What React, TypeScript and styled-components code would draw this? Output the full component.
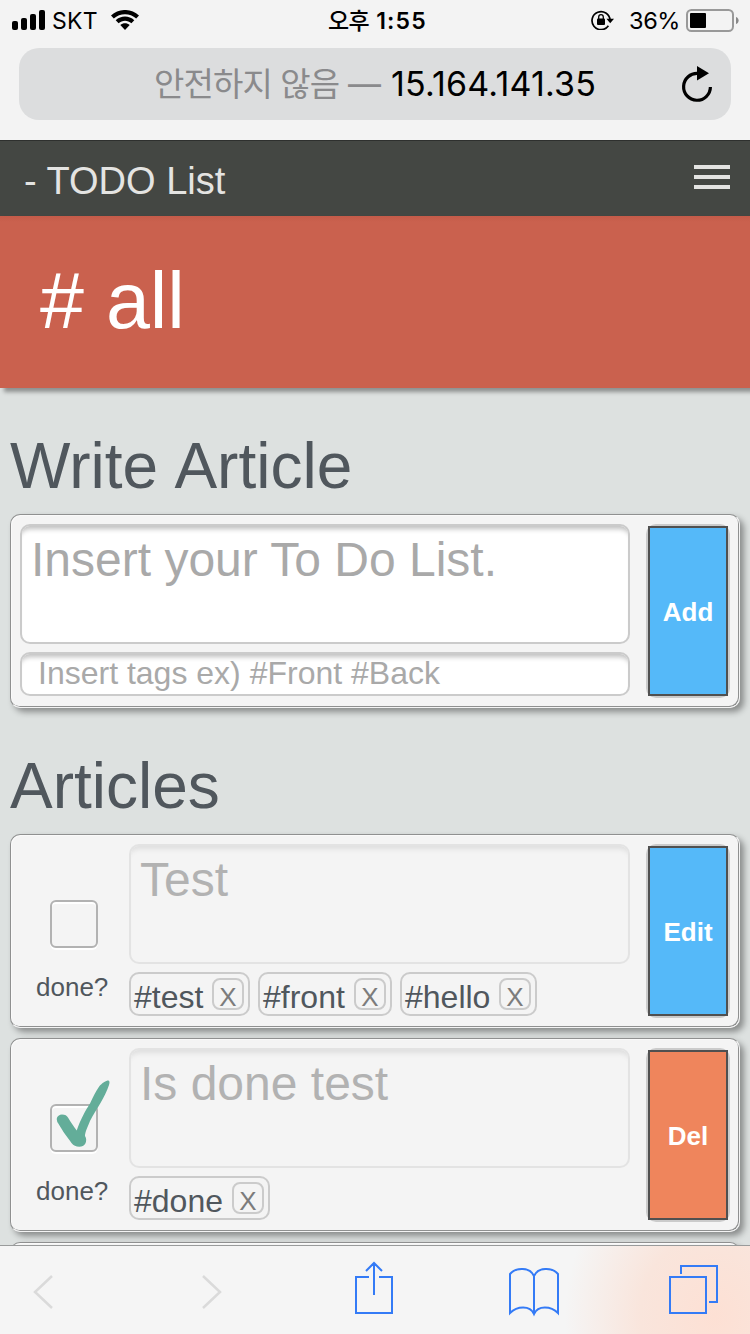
import React from "react";
import styled, { createGlobalStyle } from "styled-components";

const Global = createGlobalStyle`
  * { box-sizing: border-box; }
  body { margin: 0; }
`;

const sans = `"Liberation Sans", Arial, sans-serif`;
const system = `Inter, "Noto Sans CJK KR", sans-serif`;

const Screen = styled.div`
  width: 750px;
  height: 1334px;
  display: flex;
  flex-direction: column;
  overflow: hidden;
  background: #dde1e0;
  font-family: ${sans};
  color: #50575d;
`;

const BrowserTop = styled.div`
  height: 140px;
  flex: none;
  background: #f3f3f3;
  font-family: ${system};
  color: #000;
`;

const StatusBar = styled.div`
  height: 48px;
  padding: 0 11px 8px 12px;
  display: grid;
  grid-template-columns: 1fr auto 1fr;
  align-items: center;
  font-size: 24px;
  line-height: 40px;
`;

const StatusGroup = styled.div<{ $end?: boolean }>`
  display: flex;
  align-items: center;
  justify-content: ${(p) => (p.$end ? "flex-end" : "flex-start")};
`;

const Carrier = styled.span`
  margin: 2px 13px 0 6px;
  font-size: 23px;
  line-height: 38px;
  letter-spacing: 0.3px;
`;

const Clock = styled.div`
  display: flex;
  gap: 7px;
  padding-top: 2px;
  margin-left: 4px;
  line-height: 38px;
  font-size: 23px;
  font-weight: 600;
  letter-spacing: 1.2px;
`;

const Meridiem = styled.span`
  font-size: 23px;
  font-weight: 500;
  letter-spacing: -0.6px;
`;

const Percent = styled.span`
  margin: 2px 6px 0 15px;
  line-height: 38px;
  font-size: 23.5px;
  letter-spacing: -0.4px;
`;

const AddressBar = styled.div`
  height: 72px;
  margin: 0 19px;
  padding: 0 18px 0 135px;
  border-radius: 20px;
  background: #dcddde;
  display: flex;
  align-items: center;
  justify-content: space-between;
  font-size: 33px;
  line-height: 72px;
`;

const Address = styled.div`
  display: flex;
  white-space: pre;
`;

const Insecure = styled.span`
  color: #8a8a8c;
  width: 194px;
  letter-spacing: -0.9px;
`;

const Dash = styled.span`
  color: #8a8a8c;
  width: 43px;
`;

const Host = styled.span`
  font-size: 34px;
  letter-spacing: 0.2px;
`;

const Header = styled.header`
  height: 76px;
  flex: none;
  padding: 5px 20px 0 24px;
  border-top: 1px solid #2e302e;
  background: #444743;
  display: flex;
  align-items: center;
  justify-content: space-between;
  color: #e4e4e2;
  font-size: 38px;
`;

const MenuButton = styled.div`
  width: 36px;
  height: 24px;
  margin-top: -8px;
  display: flex;
  flex-direction: column;
  justify-content: space-between;
`;

const MenuLine = styled.span`
  height: 4px;
  background: #e4e4e2;
`;

const Hero = styled.div`
  height: 172px;
  flex: none;
  padding-left: 40px;
  background: linear-gradient(#c45b49, #ca614e 6px);
  box-shadow: 4px 4px 4px rgba(0, 0, 0, 0.36);
  color: #fff;
  font-size: 79px;
  line-height: 169px;
`;

const Content = styled.main`
  flex: 1;
  min-height: 0;
  overflow: hidden;
  padding: 0 10px;
`;

const Title = styled.h2`
  margin: 30px 0 0;
  height: 96px;
  font-size: 64px;
  font-weight: 400;
  line-height: 97px;
  word-spacing: 2px;
`;

const Card = styled.section`
  height: 194px;
  margin-bottom: 10px;
  padding: 9px;
  display: flex;
  background: #f4f4f4;
  border: 1px solid #8f9090;
  border-right-color: #f3f3f3;
  border-bottom-color: #f3f3f3;
  border-radius: 10px;
  box-shadow: inset -1px -1px 0 #8f9090, inset 1px 1px 0 #fafafa,
    4px 4px 6px rgba(0, 0, 0, 0.38);
`;

const Fields = styled.div`
  flex: 1;
  min-width: 0;
  display: flex;
  flex-direction: column;
  gap: 8px;
`;

const TextBox = styled.div<{ $disabled?: boolean }>`
  height: 120px;
  padding: 7px 9px;
  border: 2px solid ${(p) => (p.$disabled ? "#e3e3e3" : "#cbcbcb")};
  border-radius: 10px;
  background: ${(p) => (p.$disabled ? "#f4f4f4" : "#fff")};
  box-shadow: inset 0 7px 5px -4px ${(p) => (p.$disabled ? "#dedede" : "#c0c0c0")};
  color: ${(p) => (p.$disabled ? "#b2b2b2" : "#a9a9a9")};
  font-size: 48px;
  line-height: 54px;
  white-space: nowrap;
`;

const TagInput = styled.div`
  height: 44px;
  padding-left: 16px;
  border: 2px solid #cbcbcb;
  border-radius: 10px;
  background: #fff;
  box-shadow: inset 0 7px 5px -4px #c0c0c0;
  color: #a9a9a9;
  font-size: 32px;
  line-height: 38px;
`;

const ActionFrame = styled.div`
  width: 84px;
  height: 174px;
  margin-left: 16px;
  padding: 2px;
  border-radius: 10px;
  background: #cbcbcb;
`;

const Action = styled.div<{ $danger?: boolean }>`
  height: 170px;
  border: 2px solid #505050;
  background: ${(p) => (p.$danger ? "#ef855c" : "#55b9f9")};
  color: #fff;
  text-align: center;
  font-size: 26px;
  font-weight: 700;
  line-height: 168px;
`;

const DoneColumn = styled.div`
  width: 109px;
  padding: 56px 0 0 16px;
  display: flex;
  flex-direction: column;
  gap: 24px;
  font-size: 26px;
  line-height: 30px;
`;

const CheckBox = styled.div`
  width: 48px;
  height: 48px;
  margin-left: 14px;
  border: 2px solid #b2b2b2;
  border-radius: 6px;
  box-shadow: 0 2px 0 #fff, inset 0 2px 0 #fff;
`;

const CheckMark = styled.svg`
  display: block;
  margin: -26px 0 0 2px;
  overflow: visible;
`;

const Tags = styled.div`
  display: flex;
  gap: 8px;
`;

const Tag = styled.div<{ $width: number }>`
  width: ${(p) => p.$width}px;
  height: 44px;
  padding: 0 4px 0 3px;
  border: 2px solid #cbcbcb;
  border-radius: 10px;
  display: flex;
  align-items: center;
  justify-content: space-between;
  font-size: 32px;
  line-height: 46px;
  white-space: nowrap;
`;

const TagName = styled.span`
  padding-top: 5px;
`;

const TagRemove = styled.span`
  width: 32px;
  height: 32px;
  border: 2px solid #cbcbcb;
  border-radius: 8px;
  color: #7c7c7c;
  font-size: 26px;
  line-height: 34px;
  text-align: center;
`;

const Toolbar = styled.nav`
  height: 89px;
  flex: none;
  border-top: 1px solid #999b9b;
  background: radial-gradient(ellipse 150px 170px at 715px 70px, #fde0d4 0%, #f9e5dc 50%, rgba(245, 245, 245, 0) 100%), #f5f5f5;
  padding: 15px 31px 0 32px;
  display: grid;
  grid-template-columns: 169px 154px 154px 160px 50px;
`;

const ToolIcon = styled.svg<{ $muted?: boolean }>`
  fill: none;
  stroke: ${(p) => (p.$muted ? "#dadada" : "#347bf6")};
  stroke-width: ${(p) => (p.$muted ? 2.5 : 2)};
  height: 56px;
`;

function ArticleTag({ text, width }: { text: string; width: number }) {
  return (
    <Tag $width={width}>
      <TagName>{text}</TagName>
      <TagRemove>X</TagRemove>
    </Tag>
  );
}

function ActionButton({ label, danger }: { label: string; danger?: boolean }) {
  return (
    <ActionFrame>
      <Action $danger={danger}>{label}</Action>
    </ActionFrame>
  );
}

type ArticleProps = {
  text: string;
  done?: boolean;
  tags: { text: string; width: number }[];
};

function Article({ text, done, tags }: ArticleProps) {
  return (
    <Card>
      <DoneColumn>
        <CheckBox>
          {done && (
            <CheckMark width="56" height="68" viewBox="0 0 56 68">
              <path
                d="M2.700 39C3 36 5.500 34.500 8 34.500C11 34.500 13 35.500 14.300 38C16.500 42 19.500 46 22.700 50.500C26 41 31 31 36 23.500C39 17 42 11 45 6.700C48 3 52 .5 54.500 .5C56 1.500 55.500 3 55 5C53 11 50 17 46.500 23C43 29 39 35 36 41C34 46 31 52 31 56C32.500 58 32.500 61 31.500 63.300C30 66 28 66.700 25.300 66.700C22 66.700 19.500 65.500 17.500 63C15 59 12 56 9.500 52C7 48 5 44.500 3.300 42Z"
                fill="#63ad99"
              />
            </CheckMark>
          )}
        </CheckBox>
        <span>done?</span>
      </DoneColumn>
      <Fields>
        <TextBox $disabled>{text}</TextBox>
        <Tags>
          {tags.map((t) => (
            <ArticleTag key={t.text} {...t} />
          ))}
        </Tags>
      </Fields>
      <ActionButton label={done ? "Del" : "Edit"} danger={done} />
    </Card>
  );
}

export default function App() {
  return (
    <Screen>
      <Global />
      <BrowserTop>
        <StatusBar>
          <StatusGroup>
            <svg width="34" height="20" viewBox="0 0 34 20">
              <rect x="0" y="11" width="6" height="9" rx="2" />
              <rect x="9" y="8" width="6" height="12" rx="2" />
              <rect x="18" y="4" width="6" height="16" rx="2" />
              <rect x="27" y="0" width="6" height="20" rx="2" />
            </svg>
            <Carrier>SKT</Carrier>
            <svg width="28" height="20" viewBox="0 0 28 20">
              <path d="M0 5.6C7.800-1.900 20.200-1.900 28 5.600L25.200 8.500C19 2.700 9 2.700 2.800 8.500Z" />
              <path d="M4.700 10.300C10 5.300 18 5.300 23.300 10.300L20.400 13.200C16.800 9.800 11.200 9.800 7.600 13.200Z" />
              <path d="M9.300 15.100C12 12.700 16 12.700 18.700 15.100L14 20Z" />
            </svg>
          </StatusGroup>
          <Clock>
            <Meridiem>오후</Meridiem>
            <span>1:55</span>
          </Clock>
          <StatusGroup $end>
            <svg width="23" height="20" viewBox="0 0 23 20">
              <path d="M17.400 15.800A9 9 0 1 1 19 10" fill="none" stroke="#000" strokeWidth="1.700" />
              <path d="M15.500 8.800H23L19.200 13.300Z" />
              <rect x="6" y="8.500" width="8" height="6.500" rx="1" />
              <path d="M7.700 9V7A2.300 2.300 0 0 1 12.300 7V9" fill="none" stroke="#000" strokeWidth="1.300" />
            </svg>
            <Percent>36%</Percent>
            <svg width="53" height="24" viewBox="0 0 53 24">
              <rect x="1" y="2" width="46" height="21" rx="4.500" fill="none" stroke="#999" strokeWidth="2" />
              <rect x="4" y="5" width="16" height="15" rx="1" />
              <path d="M50 9C53.500 10 53.500 15 50 16Z" fill="#888" />
            </svg>
          </StatusGroup>
        </StatusBar>
        <AddressBar>
          <Address>
            <Insecure>안전하지 않음</Insecure>
            <Dash>—</Dash>
            <Host>15.164.141.35</Host>
          </Address>
          <svg width="32" height="38" viewBox="0 0 32 38">
            <path d="M17 8.500A13.400 13.400 0 1 0 29.400 22" fill="none" stroke="#000" strokeWidth="3.200" />
            <path d="M16 1L28 8.300L16 15.500Z" />
          </svg>
        </AddressBar>
      </BrowserTop>

      <Header>
        <span>- TODO List</span>
        <MenuButton>
          <MenuLine />
          <MenuLine />
          <MenuLine />
        </MenuButton>
      </Header>
      <Hero># all</Hero>

      <Content>
        <Title>Write Article</Title>
        <Card>
          <Fields>
            <TextBox>Insert your To Do List.</TextBox>
            <TagInput>Insert tags ex) #Front #Back</TagInput>
          </Fields>
          <ActionButton label="Add" />
        </Card>
        <Title>Articles</Title>
        <Article
          text="Test"
          tags={[
            { text: "#test", width: 121 },
            { text: "#front", width: 134 },
            { text: "#hello", width: 137 },
          ]}
        />
        <Article text="Is done test" done tags={[{ text: "#done", width: 141 }]} />
        <Card />
      </Content>

      <Toolbar>
        <ToolIcon $muted width="22" viewBox="0 0 22 56">
          <path d="M20 15L3 31L20 47" />
        </ToolIcon>
        <ToolIcon $muted width="22" viewBox="0 0 22 56">
          <path d="M2 15L19 31L2 47" />
        </ToolIcon>
        <ToolIcon width="38" viewBox="0 0 38 56">
          <path d="M14 16H1V52H37V16H24M19 34V2M11 10L19 2L27 10" />
        </ToolIcon>
        <ToolIcon width="50" viewBox="0 0 50 56">
          <path d="M25 53V15C21 6 7 6 1 13V52C8 45 21 44 25 53C29 44 42 45 49 52V13C43 6 29 6 25 15" />
        </ToolIcon>
        <ToolIcon width="50" viewBox="0 0 50 56">
          <path d="M1 16H37V52H1ZM12 13V5H48V41H40" />
        </ToolIcon>
      </Toolbar>
    </Screen>
  );
}
